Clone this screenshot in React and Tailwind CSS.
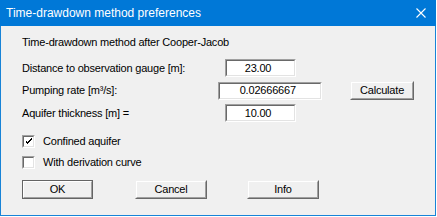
import { useState } from 'react'

const body = { fontFamily: '"Liberation Sans", Arial, sans-serif' }
const txt = 'text-[11px] tracking-[-0.2px] leading-none text-black'

function Field({ value, width }) {
  return (
    <div className={`${width} h-[18px] border border-t-[#a0a0a0] border-l-[#a0a0a0] border-b-white border-r-white`}>
      <div className={`h-full bg-white border border-t-[#696969] border-l-[#696969] border-b-[#e3e3e3] border-r-[#e3e3e3] flex items-center justify-center pr-[5px] ${txt}`}>
        {value}
      </div>
    </div>
  )
}

function Button({ label, width, isDefault = false, className = '' }) {
  return (
    <div
      className={`${width} h-[19px] border ${
        isDefault
          ? 'border-[#646464]'
          : 'border-t-[#f0f0f0] border-l-[#f0f0f0] border-b-[#696969] border-r-[#696969]'
      } ${className}`}
    >
      <div className={`h-full w-full border border-t-white border-l-white border-b-[#a0a0a0] border-r-[#a0a0a0] bg-[#f0f0f0] flex items-center justify-center ${txt}`}>
        {label}
      </div>
    </div>
  )
}

function CheckBox({ checked, label, onToggle }) {
  return (
    <div className="h-[13px] flex items-center cursor-pointer" onClick={onToggle}>
      <div className="w-[13px] h-[13px] border border-t-[#a0a0a0] border-l-[#a0a0a0] border-b-white border-r-white">
        <div className="w-full h-full bg-white border border-t-[#696969] border-l-[#696969] border-b-[#e3e3e3] border-r-[#e3e3e3] flex items-center justify-center">
          {checked && (
            <svg width="7" height="7" viewBox="0 0 7 7" shapeRendering="crispEdges">
              <path d="M0 2h1v3h1v1h1V5h1V4h1V3h1V2h1V0h-1v1h-1v1h-1v1h-1v1H2V3H1V2z" fill="#000" />
            </svg>
          )}
        </div>
      </div>
      <span className={`ml-[8px] ${txt}`}>{label}</span>
    </div>
  )
}

export default function App() {
  const [confined, setConfined] = useState(true)
  const [derivation, setDerivation] = useState(false)

  return (
    <div className="w-[436px] h-[216px] bg-[#1883d7] flex flex-col" style={body}>
      {/* Title bar */}
      <div className="h-[26px] bg-[#0078d7] flex items-center justify-between pl-[6px] pr-[10px]">
        <span className="text-white text-[12px]">Time-drawdown method preferences</span>
        <svg width="10" height="10" viewBox="0 0 10 10">
          <path d="M0.5 0.5L9.5 9.5M9.5 0.5L0.5 9.5" stroke="#fff" strokeWidth="1.1" />
        </svg>
      </div>

      {/* Content */}
      <div className="flex-1 mx-px mb-px bg-[#f0f0f0] px-[21px] flex flex-col">
        <div className={`mt-[11px] h-[15px] leading-[15px] ${txt}`}>
          Time-drawdown method after Cooper-Jacob
        </div>

        <div className="mt-[7px] flex items-center">
          <span className={`w-[203px] ${txt}`}>Distance to observation gauge [m]:</span>
          <Field value="23.00" width="w-[71px]" />
        </div>

        <div className="mt-[4px] flex items-center">
          <span className={`w-[203px] ${txt}`}>Pumping rate [m³/s]:</span>
          <Field value="0.02666667" width="w-[107px]" />
          <Button label="Calculate" width="w-[66px]" className="ml-[28px]" />
        </div>

        <div className="mt-[4px] flex items-center">
          <span className={`w-[203px] ${txt}`}>Aquifer thickness [m] =</span>
          <Field value="10.00" width="w-[71px]" />
        </div>

        <div className="mt-[13px]">
          <CheckBox checked={confined} label="Confined aquifer" onToggle={() => setConfined(!confined)} />
        </div>
        <div className="mt-[8px]">
          <CheckBox checked={derivation} label="With derivation curve" onToggle={() => setDerivation(!derivation)} />
        </div>

        <div className="mt-[11px] flex items-center">
          <Button label="OK" width="w-[71px]" isDefault />
          <Button label="Cancel" width="w-[72px]" className="ml-[42px]" />
          <Button label="Info" width="w-[72px]" className="ml-[40px]" />
        </div>
      </div>
    </div>
  )
}
